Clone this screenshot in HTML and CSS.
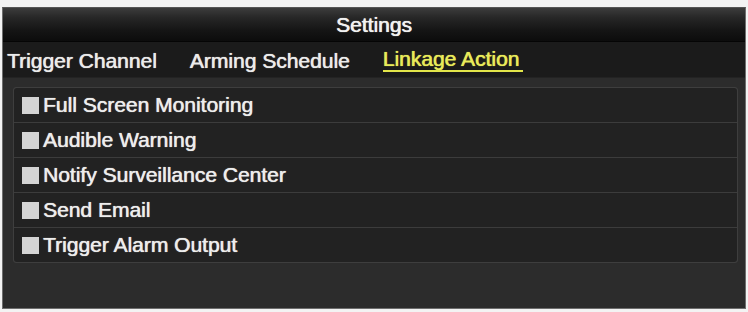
FILE: index.html
```html
<!DOCTYPE html>
<html>
<head>
<meta charset="utf-8">
<link rel="stylesheet" href="styles.css">
</head>
<body>
<div class="panel">
  <div class="titlebar">Settings</div>
  <div class="tabs">
    <span class="tab">Trigger Channel</span>
    <span class="tab">Arming Schedule</span>
    <span class="tab active">Linkage Action</span>
  </div>
  <div class="content">
    <div class="list">
      <div class="row"><span class="check"></span><span class="label">Full Screen Monitoring</span></div>
      <div class="row"><span class="check"></span><span class="label">Audible Warning</span></div>
      <div class="row"><span class="check"></span><span class="label">Notify Surveillance Center</span></div>
      <div class="row"><span class="check"></span><span class="label">Send Email</span></div>
      <div class="row"><span class="check"></span><span class="label">Trigger Alarm Output</span></div>
    </div>
  </div>
</div>
</body>
</html>
```

FILE: styles.css
```css
html, body {
  margin: 0;
  padding: 0;
  background: #f3f3f3;
}
body {
  font-family: "Liberation Sans", Arial, sans-serif;
  width: 748px;
  height: 312px;
  overflow: hidden;
}
.panel {
  margin: 7px 2px 0 2px;
  height: 302px;
  box-sizing: border-box;
  border: 1px solid #6e6e6e;
  border-top-color: #555;
  background: #2c2c2c;
  display: flex;
  flex-direction: column;
}
.titlebar {
  height: 33px;
  flex: none;
  background: linear-gradient(#3c3c3c 0%, #262626 30%, #141414 70%, #0c0c0c 100%);
  color: #f2f2f2;
  font-size: 21px;
  text-align: center;
  line-height: 33px;
  text-shadow: 0 0 1px #ddd, 0.4px 0 0 #ddd;
}
.tabs {
  height: 35px;
  flex: none;
  background: #1b1b1b;
  border-top: 1px solid #050505;
  border-bottom: 1px solid #232323;
  display: flex;
  align-items: center;
  padding-left: 4px;
}
.tab {
  font-size: 21px;
  color: #ececec;
  margin-right: 33px;
  line-height: 23px;
  padding-top: 1px;
  text-shadow: 0 0 1px #ccc, 0.4px 0 0 #ccc;
}
.tab.active {
  color: #e9ec5a;
  border-bottom: 2px solid #e3e64a;
  padding-right: 4px;
  line-height: 22px;
  text-shadow: 0 0 1px #c8ca50, 0.4px 0 0 #c8ca50;
}
.content {
  padding: 9px 7px 0 10px;
}
.list {
  border: 1px solid #3e3e3e;
  border-radius: 3px;
  background: #3c3c3c;
  display: flex;
  flex-direction: column;
  gap: 1px;
}
.row {
  height: 34px;
  background: #222222;
  display: flex;
  align-items: center;
  padding-left: 8px;
}
.row:first-child { border-radius: 3px 3px 0 0; }
.row:last-child { border-radius: 0 0 3px 3px; }
.check {
  width: 17px;
  height: 17px;
  background: #d4d4d4;
  flex: none;
  margin-right: 4px;
}
.label {
  font-size: 21px;
  color: #eeeeee;
  text-shadow: 0 0 1px #ccc, 0.4px 0 0 #ccc;
}
```
